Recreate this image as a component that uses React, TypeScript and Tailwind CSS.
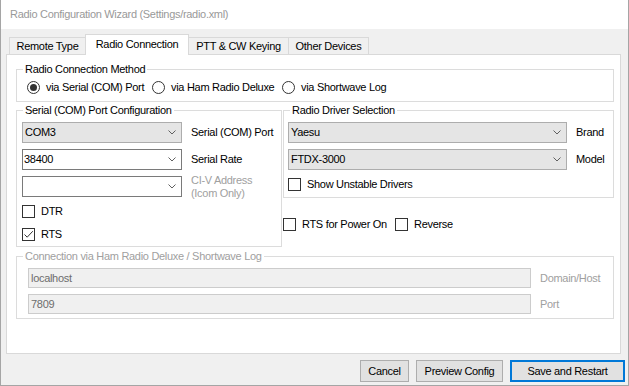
import React from 'react';

function GroupBox({ label, disabled, className, children }: { label: string; disabled?: boolean; className: string; children: React.ReactNode }) {
  return (
    <div className={`relative border border-[#dcdcdc] shrink-0 ${className}`}>
      <span className={`absolute left-[6px] -top-[7px] px-[2px] bg-white leading-[13px] whitespace-nowrap ${disabled ? 'text-[#a0a0a0]' : 'text-black'}`}>
        {label}
      </span>
      {children}
    </div>
  );
}

function Chevron() {
  return (
    <svg width="8" height="5" viewBox="0 0 8 5" className="shrink-0">
      <polyline points="0.5,0.5 4,4 7.5,0.5" fill="none" stroke="#606060" strokeWidth="1" />
    </svg>
  );
}

function Combo({ value, editable, width }: { value: string; editable?: boolean; width: string }) {
  return (
    <div
      className={`${width} h-[21px] shrink-0 flex items-center justify-between pr-[5px] border ${
        editable ? 'bg-white border-[#7a7a7a] pl-[1px]' : 'bg-[#e5e5e5] border-[#adadad] pl-[2px]'
      }`}
    >
      <span className="leading-[13px]">{value}</span>
      <Chevron />
    </div>
  );
}

function CheckBox({ checked }: { checked?: boolean }) {
  return (
    <div className="w-[13px] h-[13px] shrink-0 border border-[#333333] bg-white flex items-center justify-center">
      {checked && (
        <svg width="11" height="11" viewBox="0 0 11 11">
          <polyline points="1.5,5.5 4.2,8.2 9.8,2.2" fill="none" stroke="#333333" strokeWidth="1" />
        </svg>
      )}
    </div>
  );
}

function Radio({ checked, label, className }: { checked?: boolean; label: string; className?: string }) {
  return (
    <div className={`flex items-center shrink-0 ${className ?? ''}`}>
      <div className="w-[13px] h-[13px] rounded-full border border-[#333333] bg-white flex items-center justify-center">
        {checked && <div className="w-[7px] h-[7px] rounded-full bg-[#333333]" />}
      </div>
      <span className="ml-[6px] leading-[13px] whitespace-nowrap">{label}</span>
    </div>
  );
}

export default function App() {
  const tabs = ['Remote Type', 'Radio Connection', 'PTT & CW Keying', 'Other Devices'];
  const tabWidths = ['w-[77px]', 'w-[104px]', 'w-[101px]', 'w-[81px]'];

  return (
    <div className="w-[629px] h-[386px] flex flex-col bg-[#f0f0f0] border-x border-b border-[#a5a5a5] font-['Liberation_Sans',Arial,sans-serif] text-[11px] tracking-[-0.3px] text-black overflow-hidden">
      {/* title bar */}
      <div className="h-[29px] shrink-0 bg-white flex items-center pl-[9px] text-[#999999]">
        Radio Configuration Wizard (Settings/radio.xml)
      </div>

      {/* tabs */}
      <div className="h-[25px] shrink-0 flex items-end pl-[8px]">
        {tabs.map((t, i) => {
          const active = i === 1;
          return (
            <div
              key={t}
              className={`${tabWidths[i]} ${i > 0 ? '-ml-px' : ''} border border-b-0 border-[#d9d9d9] flex items-center justify-center whitespace-nowrap ${
                active ? 'relative z-10 h-[21px] -mb-px bg-white pb-[2px]' : 'h-[17px] bg-[#f0f0f0]'
              }`}
            >
              {t}
            </div>
          );
        })}
      </div>

      {/* tab page */}
      <div className="ml-[5px] w-[615px] h-[300px] shrink-0 bg-white border border-[#d9d9d9] flex flex-col pl-[9px] pt-[14px]">
        <GroupBox label="Radio Connection Method" className="w-[598px] h-[33px]">
          <div className="flex items-center h-[13px] mt-[11px] pl-[10px]">
            <Radio checked label="via Serial (COM) Port" className="w-[125px]" />
            <Radio label="via Ham Radio Deluxe" className="w-[130px]" />
            <Radio label="via Shortwave Log" />
          </div>
        </GroupBox>

        <div className="flex gap-[1px] mt-[8px]">
          <GroupBox label="Serial (COM) Port Configuration" className="w-[266px] h-[137px]">
            <div className="flex flex-col pl-[5px] pt-[11px]">
              <div className="flex items-center">
                <Combo value="COM3" width="w-[160px]" />
                <span className="ml-[9px]">Serial (COM) Port</span>
              </div>
              <div className="flex items-center mt-[6px]">
                <Combo value="38400" editable width="w-[160px]" />
                <span className="ml-[9px]">Serial Rate</span>
              </div>
              <div className="flex items-center mt-[6px] h-[21px]">
                <Combo value="" editable width="w-[160px]" />
                <span className="ml-[9px] leading-[13px] text-[#a0a0a0]">
                  CI-V Address
                  <br />
                  (Icom Only)
                </span>
              </div>
              <div className="flex items-center h-[13px] mt-[8px]">
                <CheckBox />
                <span className="ml-[6px]">DTR</span>
              </div>
              <div className="flex items-center h-[13px] mt-[10px]">
                <CheckBox checked />
                <span className="ml-[6px]">RTS</span>
              </div>
            </div>
          </GroupBox>

          <div className="flex flex-col">
            <GroupBox label="Radio Driver Selection" className="w-[331px] h-[88px]">
              <div className="flex flex-col pl-[4px] pt-[11px]">
                <div className="flex items-center">
                  <Combo value="Yaesu" width="w-[279px]" />
                  <span className="ml-[9px]">Brand</span>
                </div>
                <div className="flex items-center mt-[6px]">
                  <Combo value="FTDX-3000" width="w-[279px]" />
                  <span className="ml-[9px]">Model</span>
                </div>
                <div className="flex items-center h-[13px] mt-[8px]">
                  <CheckBox />
                  <span className="ml-[6px]">Show Unstable Drivers</span>
                </div>
              </div>
            </GroupBox>
            <div className="flex items-center h-[13px] mt-[20px]">
              <div className="flex items-center w-[112px]">
                <CheckBox />
                <span className="ml-[6px] whitespace-nowrap">RTS for Power On</span>
              </div>
              <CheckBox />
              <span className="ml-[6px]">Reverse</span>
            </div>
          </div>
        </div>

        <GroupBox label="Connection via Ham Radio Deluxe / Shortwave Log" disabled className="w-[598px] h-[63px] mt-[9px]">
          <div className="flex flex-col pl-[11px] pt-[11px]">
            <div className="flex items-center">
              <div className="w-[503px] h-[20px] bg-[#f0f0f0] border border-[#cccccc] flex items-center pl-[2px] text-[#6d6d6d]">
                localhost
              </div>
              <span className="ml-[9px] text-[#a0a0a0]">Domain/Host</span>
            </div>
            <div className="flex items-center mt-[6px]">
              <div className="w-[503px] h-[20px] bg-[#f0f0f0] border border-[#cccccc] flex items-center pl-[2px] text-[#6d6d6d]">
                7809
              </div>
              <span className="ml-[9px] text-[#a0a0a0]">Port</span>
            </div>
          </div>
        </GroupBox>
      </div>

      {/* buttons */}
      <div className="flex justify-end gap-[7px] pr-[3px] mt-[6px]">
        <button className="w-[49px] h-[22px] bg-[#e1e1e1] border border-[#adadad]">Cancel</button>
        <button className="w-[87px] h-[22px] bg-[#e1e1e1] border border-[#adadad]">Preview Config</button>
        <button className="w-[115px] h-[22px] bg-[#e1e1e1] border-2 border-[#0078d7]">Save and Restart</button>
      </div>
    </div>
  );
}
